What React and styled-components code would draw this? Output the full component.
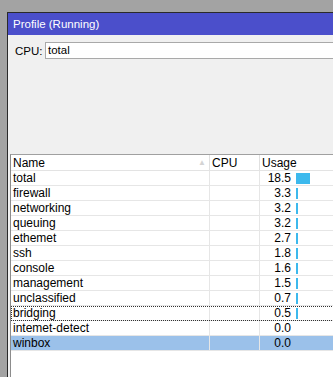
import React from 'react';
import styled, { createGlobalStyle } from 'styled-components';

const GlobalStyle = createGlobalStyle`
    html, body {
        margin: 0;
        padding: 0;
        background: #a3a3a3;
        overflow: hidden;
    }
    body {
        font-family: "Liberation Sans", Arial, sans-serif;
        font-size: 11px;
        color: #000;
    }
`

const rows = [
    { name: "total", usage: 18.5 },
    { name: "firewall", usage: 3.3 },
    { name: "networking", usage: 3.2 },
    { name: "queuing", usage: 3.2 },
    { name: "ethemet", usage: 2.7 },
    { name: "ssh", usage: 1.8 },
    { name: "console", usage: 1.6 },
    { name: "management", usage: 1.5 },
    { name: "unclassified", usage: 0.7 },
    { name: "bridging", usage: 0.5, focused: true },
    { name: "intemet-detect", usage: 0.0 },
    { name: "winbox", usage: 0.0, selected: true },
];

function barWidth(value) {
    if (value <= 0) return 0;
    return Math.max(2, Math.floor(value * 0.8));
}

export default function App() {
    return (
        <>
            <GlobalStyle />
            <Screen>
                <Window>
                    <TitleBar>Profile (Running)</TitleBar>
                    <Body>
                        <CpuRow>
                            <Label>CPU:</Label>
                            <CpuInput>total</CpuInput>
                        </CpuRow>
                        <Table>
                            <HeaderRow>
                                <HeaderCell width={199}>
                                    Name
                                    <SortArrow>▲</SortArrow>
                                </HeaderCell>
                                <HeaderCell width={50}>CPU</HeaderCell>
                                <HeaderCell grow>Usage</HeaderCell>
                            </HeaderRow>
                            {rows.map(row => (
                                <Row key={row.name} selected={row.selected} focused={row.focused}>
                                    <Cell width={199}>{row.name}</Cell>
                                    <Cell width={50}></Cell>
                                    <UsageCell>
                                        <Value>{row.usage.toFixed(1)}</Value>
                                        {barWidth(row.usage) > 0 && <Bar style={{ width: barWidth(row.usage) }} />}
                                    </UsageCell>
                                </Row>
                            ))}
                        </Table>
                    </Body>
                </Window>
            </Screen>
        </>
    )
}

const Screen = styled.div`
    width: 333px;
    height: 377px;
    padding: 12px 0 0 7px;
    box-sizing: border-box;
    overflow: hidden;
`

const Window = styled.div`
    width: 400px;
    height: 400px;
    border-left: 1px solid #2a2a2a;
    border-top: 1px solid #2a2a2a;
    background: #f0f0f0;
    display: flex;
    flex-direction: column;
`

const TitleBar = styled.div`
    height: 22px;
    background: #4b4fcb;
    color: #fff;
    font-size: 11.5px;
    line-height: 22px;
    padding-left: 5px;
`

const Body = styled.div`
    flex: 1;
    display: flex;
    flex-direction: column;
    padding: 7px 0 0 2px;
`

const CpuRow = styled.div`
    display: flex;
    align-items: center;
    height: 17px;
    padding-left: 5px;
`

const Label = styled.span`
    width: 30px;
    font-size: 11.5px;
`

const CpuInput = styled.div`
    flex: 1;
    height: 17px;
    box-sizing: border-box;
    background: #fff;
    border: 1px solid #a9a9a9;
    border-right: none;
    font-size: 11.5px;
    line-height: 15px;
    padding-left: 2px;
`

const Table = styled.div`
    margin-top: 95px;
    flex: 1;
    background: #fff;
    border-left: 1px solid #8c8c8c;
    border-top: 1px solid #a0a0a0;
`

const HeaderRow = styled.div`
    display: flex;
    height: 15px;
    border-bottom: 1px solid #e3e3e3;
`

const HeaderCell = styled.div`
    position: relative;
    ${p => p.grow ? 'flex: 1;' : `width: ${p.width}px;`}
    border-right: 1px solid #e0e0e0;
    padding-left: 2px;
    box-sizing: border-box;
    font-size: 12px;
    line-height: 16px;
`

const SortArrow = styled.span`
    position: absolute;
    right: 3px;
    top: 0;
    font-size: 8px;
    color: #d4d4d4;
`

const Row = styled.div`
    display: flex;
    height: 15px;
    box-sizing: border-box;
    border-bottom: 1px solid #e6e6e6;
    background: ${p => p.selected ? '#9bc1ea' : 'transparent'};
    outline: ${p => p.focused ? '1px dotted #333' : 'none'};
    outline-offset: -1px;
`

const Cell = styled.div`
    width: ${p => p.width}px;
    border-right: 1px solid #e6e6e6;
    padding-left: 2px;
    box-sizing: border-box;
    font-size: 12px;
    line-height: 14px;
    white-space: nowrap;
    overflow: hidden;
`

const UsageCell = styled.div`
    flex: 1;
    display: flex;
    align-items: center;
    gap: 5px;
`

const Value = styled.span`
    width: 31px;
    text-align: right;
    font-size: 12px;
    line-height: 14px;
`

const Bar = styled.div`
    height: 11px;
    background: #3cb9ed;
`
